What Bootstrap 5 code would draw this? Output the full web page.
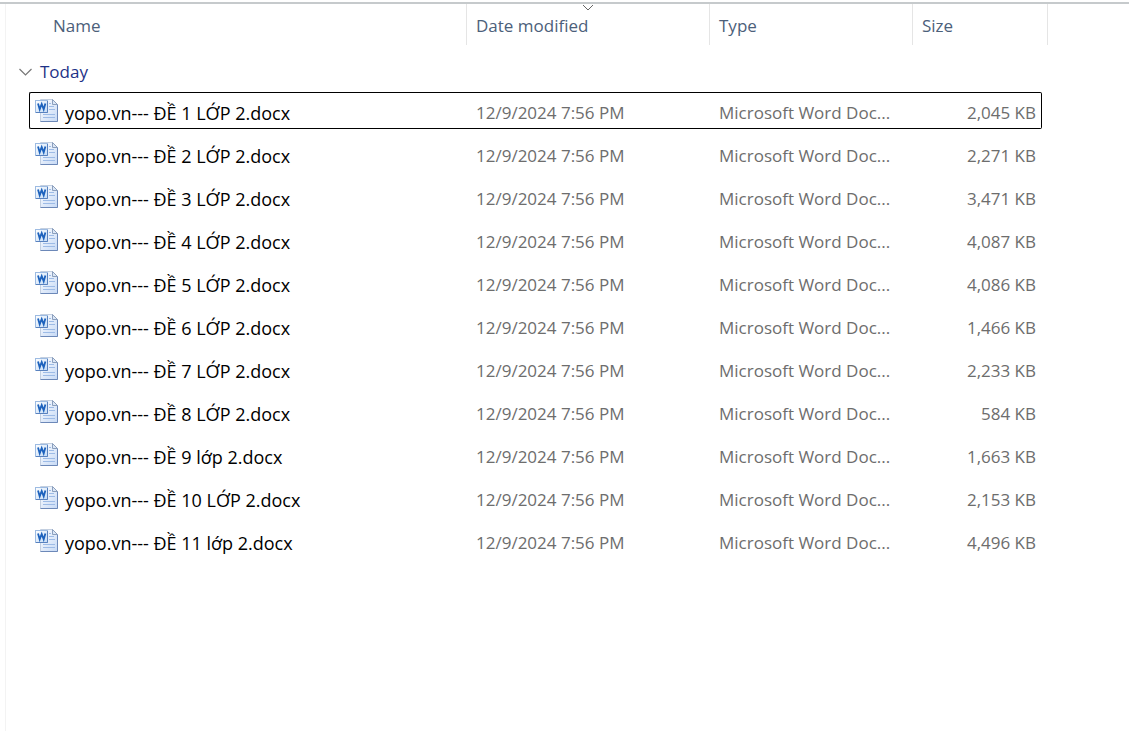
<!DOCTYPE html>
<html lang="vi">
<head>
<meta charset="utf-8">
<meta name="viewport" content="width=device-width, initial-scale=1">
<title>Files</title>
<link href="https://cdn.jsdelivr.net/npm/bootstrap@5.3.0/dist/css/bootstrap.min.css" rel="stylesheet">
<style>
  body { font-family: "Open Sans", "Noto Sans", sans-serif; font-size: 17px; line-height: 24px; color: #000; background: #fff; }
  .top-rule { height: 4px; border-bottom: 2px solid #c6cacc; }
  .file-pane { margin-left: 5px; border-left: 1px solid #f3f3f3; padding-left: 23px; }
  /* rows are separated by 6px; the negative margin drops the gap above the header */
  .file-table { table-layout: fixed; width: 100%; border-collapse: separate; border-spacing: 0 6px; margin-top: -6px; }
  .col-name { width: 438px; }
  .col-date { width: 243px; }
  .col-type { width: 203px; }
  .col-size { width: 129px; }
  .col-gap { width: 6px; }
  .file-table th { height: 41px; padding: 3px 0 0 9px; font-weight: 400; color: #4c607a; vertical-align: middle; }
  .file-table thead th { border-right: 1px solid #e5e5e5; }
  .file-table thead th:first-child { padding-left: 24px; }
  .file-table thead th:last-child { border-right: 0; }
  .file-table .group-head { height: 35px; padding: 7px 0 0; }
  .plain-btn { border: 0; padding: 0; background: none; color: inherit; }
  .group-head .plain-btn { color: #1e3287; margin-left: -10px; gap: 8px; }
  .sort-mark { top: 0; left: 50%; transform: translateX(-50%); }
  .file-table td { height: 37px; padding: 5px 0 0 9px; border: solid transparent; border-width: 1px 0; color: #6d6d6d; vertical-align: middle; white-space: nowrap; }
  .file-table td:first-child { padding-left: 5px; border-left-width: 1px; color: #000; font-size: 18px; }
  .file-table td:nth-child(4) { padding-right: 5px; border-right-width: 1px; }
  .focused td { border-color: #000; }
  .focused td:first-child { border-radius: 2px 0 0 2px; }
  .focused td:nth-child(4) { border-radius: 0 2px 2px 0; }
  .doc-icon { margin: -4px 6px 0 0; }
</style>
</head>
<body>
<svg width="0" height="0" class="position-absolute" aria-hidden="true">
  <defs>
    <linearGradient id="sheet" x1="0" y1="0" x2="1" y2="1"><stop offset="0" stop-color="#fff"/><stop offset="1" stop-color="#c6d9f5"/></linearGradient>
    <linearGradient id="tile" x1="0" y1="0" x2="1" y2="1"><stop offset="0" stop-color="#fff"/><stop offset="1" stop-color="#c3dbf6"/></linearGradient>
    <symbol id="doc" viewBox="0 0 24 24">
      <path d="M5.500 .5H17.500L22.500 5.500V22.500H5.500Z" fill="url(#sheet)" stroke="#c3cfe0"/>
      <path d="M22.500 5.500V22.500H5.500" fill="none" stroke="#6c88b8"/>
      <path d="M17.500 .5V5.500H22.500Z" fill="#dbe6f5" stroke="#8b9fbd"/>
      <path d="M14 4.500h2M14 7.500h5M14 10.500h6M8 15.500h12M8 18.500h12" stroke="#9dbbe6" fill="none"/>
      <rect x=".5" y="1.500" width="12" height="12" fill="url(#tile)" stroke="#9dbbe2"/>
      <path d="M12.500 2V13.500H1" fill="none" stroke="#5a82be"/>
      <path d="M3 4.500L4.700 10.300L6.700 5L8.700 10.300L10.400 4.500" fill="none" stroke="#1d62bd" stroke-width="1.800"/>
    </symbol>
  </defs>
</svg>
<div class="d-flex flex-column min-vh-100">
  <div class="top-rule"></div>
  <main class="file-pane flex-grow-1">
    <table class="file-table">
      <colgroup><col class="col-name"><col class="col-date"><col class="col-type"><col class="col-size"><col class="col-gap"><col></colgroup>
      <thead>
        <tr>
          <th scope="col"><button type="button" class="plain-btn">Name</button></th>
          <th scope="col" class="position-relative" aria-sort="descending"><button type="button" class="plain-btn">Date modified</button>
            <svg class="sort-mark position-absolute" width="12" height="7" viewBox="0 0 12 7" fill="none" stroke="#666" aria-hidden="true"><path d="M1 1L6 6L11 1"/></svg></th>
          <th scope="col"><button type="button" class="plain-btn">Type</button></th>
          <th scope="col" colspan="2"><button type="button" class="plain-btn">Size</button></th>
          <th aria-hidden="true"></th>
        </tr>
      </thead>
      <tbody id="files">
        <tr>
          <th colspan="6" class="group-head"><button type="button" class="plain-btn d-flex align-items-center" aria-expanded="true"><svg width="13" height="8" viewBox="0 0 13 8" fill="none" stroke="#777" stroke-width="1.200" aria-hidden="true"><path d="M.5 1L6.500 7L12.500 1"/></svg>Today</button></th>
        </tr>
      </tbody>
    </table>
  </main>
</div>
<script src="https://cdn.jsdelivr.net/npm/bootstrap@5.3.0/dist/js/bootstrap.bundle.min.js"></script>
<script>
  const files = [
    ["ĐỀ 1 LỚP 2", "2,045"], ["ĐỀ 2 LỚP 2", "2,271"], ["ĐỀ 3 LỚP 2", "3,471"], ["ĐỀ 4 LỚP 2", "4,087"],
    ["ĐỀ 5 LỚP 2", "4,086"], ["ĐỀ 6 LỚP 2", "1,466"], ["ĐỀ 7 LỚP 2", "2,233"], ["ĐỀ 8 LỚP 2", "584"],
    ["ĐỀ 9 lớp 2", "1,663"], ["ĐỀ 10 LỚP 2", "2,153"], ["ĐỀ 11 lớp 2", "4,496"]
  ];
  document.getElementById("files").insertAdjacentHTML("beforeend", files.map(([name, size], i) => `
    <tr class="${i === 0 ? "focused" : ""}">
      <td><div class="d-flex align-items-center"><svg class="doc-icon flex-shrink-0" width="24" height="24" aria-hidden="true"><use href="#doc"/></svg><span>yopo.vn--- ${name}.docx</span></div></td>
      <td>12/9/2024 7:56 PM</td>
      <td>Microsoft Word Doc...</td>
      <td class="text-end">${size} KB</td>
    </tr>`).join(""));
</script>
</body>
</html>
